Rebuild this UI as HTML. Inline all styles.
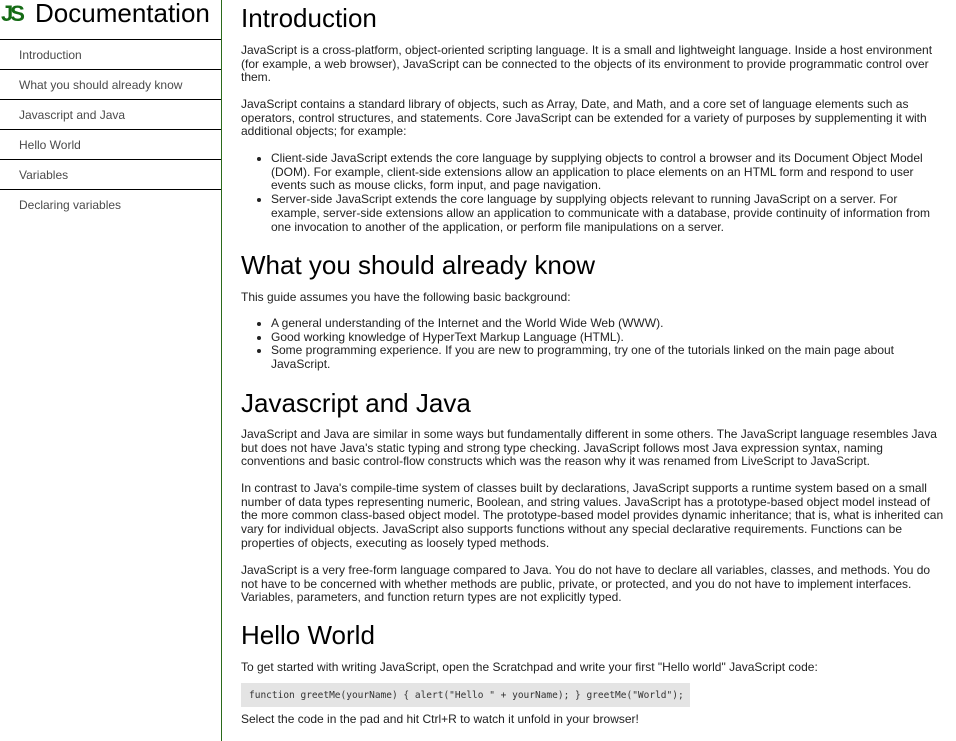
<!DOCTYPE html>
<html><head><meta charset="utf-8"><style>
*{margin:0;padding:0;box-sizing:border-box}
body{width:956px;height:741px;overflow:hidden;background:#fff;font-family:"Liberation Sans",Arial,sans-serif;color:#222;position:relative}
#side{position:absolute;left:0;top:0;width:222px;height:741px;border-right:1px solid #2a6a1a}
#title{position:absolute;left:35px;top:-2px;font-size:26px;color:#000;white-space:nowrap}
#logo{position:absolute;left:1px;top:3px;font-size:22px;font-weight:bold;color:#156b15;letter-spacing:-3px;line-height:22px}
.nav{position:absolute;left:0;width:221px;height:30px;border-top:1px solid #000;font-size:12px;color:#4a4a4a;padding-left:19px;line-height:31px}
.b{position:absolute;left:241px;width:705px;font-size:12px;line-height:13.7px}
h1{position:absolute;left:241px;font-size:26px;font-weight:normal;line-height:30px;color:#000}
ul{list-style:disc;padding-left:30px}
pre{position:absolute;left:241px;top:683px;width:449px;height:24px;background:#e4e4e4;font-family:"DejaVu Sans Mono","Liberation Mono",monospace;font-size:9.5px;line-height:25px;padding-left:8px;color:#333}
</style></head><body>
<div id="side">
<div id="logo">JS</div>
<div id="title">Documentation</div>
<div class="nav" style="top:39px">Introduction</div>
<div class="nav" style="top:69px">What you should already know</div>
<div class="nav" style="top:99px">Javascript and Java</div>
<div class="nav" style="top:129px">Hello World</div>
<div class="nav" style="top:159px">Variables</div>
<div class="nav" style="top:189px">Declaring variables</div>
</div>
<h1 style="top:3px">Introduction</h1>
<div class="b" style="top:44px">JavaScript is a cross-platform, object-oriented scripting language. It is a small and lightweight language. Inside a host environment (for example, a web browser), JavaScript can be connected to the objects of its environment to provide programmatic control over them.</div>
<div class="b" style="top:98px">JavaScript contains a standard library of objects, such as Array, Date, and Math, and a core set of language elements such as operators, control structures, and statements. Core JavaScript can be extended for a variety of purposes by supplementing it with additional objects; for example:</div>
<div class="b" style="top:152px"><ul><li>Client-side JavaScript extends the core language by supplying objects to control a browser and its Document Object Model (DOM). For example, client-side extensions allow an application to place elements on an HTML form and respond to user events such as mouse clicks, form input, and page navigation.</li><li>Server-side JavaScript extends the core language by supplying objects relevant to running JavaScript on a server. For example, server-side extensions allow an application to communicate with a database, provide continuity of information from one invocation to another of the application, or perform file manipulations on a server.</li></ul></div>
<h1 style="top:250px">What you should already know</h1>
<div class="b" style="top:291px">This guide assumes you have the following basic background:</div>
<div class="b" style="top:317px"><ul><li>A general understanding of the Internet and the World Wide Web (WWW).</li><li>Good working knowledge of HyperText Markup Language (HTML).</li><li>Some programming experience. If you are new to programming, try one of the tutorials linked on the main page about JavaScript.</li></ul></div>
<h1 style="top:388px">Javascript and Java</h1>
<div class="b" style="top:428px">JavaScript and Java are similar in some ways but fundamentally different in some others. The JavaScript language resembles Java but does not have Java's static typing and strong type checking. JavaScript follows most Java expression syntax, naming conventions and basic control-flow constructs which was the reason why it was renamed from LiveScript to JavaScript.</div>
<div class="b" style="top:482px">In contrast to Java's compile-time system of classes built by declarations, JavaScript supports a runtime system based on a small number of data types representing numeric, Boolean, and string values. JavaScript has a prototype-based object model instead of the more common class-based object model. The prototype-based model provides dynamic inheritance; that is, what is inherited can vary for individual objects. JavaScript also supports functions without any special declarative requirements. Functions can be properties of objects, executing as loosely typed methods.</div>
<div class="b" style="top:564px">JavaScript is a very free-form language compared to Java. You do not have to declare all variables, classes, and methods. You do not have to be concerned with whether methods are public, private, or protected, and you do not have to implement interfaces. Variables, parameters, and function return types are not explicitly typed.</div>
<h1 style="top:620px">Hello World</h1>
<div class="b" style="top:661px">To get started with writing JavaScript, open the Scratchpad and write your first "Hello world" JavaScript code:</div>
<pre>function greetMe(yourName) { alert("Hello " + yourName); } greetMe("World");</pre>
<div class="b" style="top:713px">Select the code in the pad and hit Ctrl+R to watch it unfold in your browser!</div>
</body></html>
